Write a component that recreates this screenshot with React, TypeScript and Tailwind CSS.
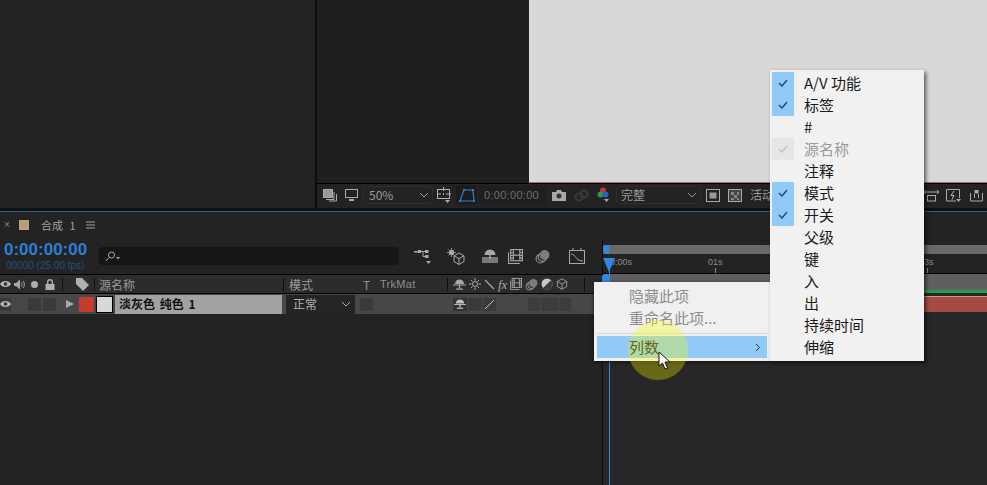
import React from 'react';

const cjk = { fontFamily: '"Noto Sans CJK SC", "Liberation Sans", sans-serif' };
const latin = { fontFamily: '"Liberation Sans", sans-serif' };

const menuItems = [
  { label: 'A/V 功能', checked: true },
  { label: '标签', checked: true },
  { label: '#' },
  { label: '源名称', disabled: true },
  { label: '注释' },
  { label: '模式', checked: true },
  { label: '开关', checked: true },
  { label: '父级' },
  { label: '键' },
  { label: '入' },
  { label: '出' },
  { label: '持续时间' },
  { label: '伸缩' },
];

function Chevron({ className = '' }: { className?: string }) {
  return (
    <svg className={className} width="10" height="6" viewBox="0 0 10 6" fill="none" stroke="currentColor" strokeWidth="1">
      <path d="M1 1l4 4 4-4" />
    </svg>
  );
}

function Eye({ className = '' }: { className?: string }) {
  return (
    <svg className={className} width="11" height="8" viewBox="0 0 11 8">
      <path d="M0 4c2-4 9-4 11 0-2 4-9 4-11 0z" fill="#b5b5b5" />
      <circle cx="5.500" cy="4" r="1.800" fill="#333" />
    </svg>
  );
}

function ParentIcon() {
  return (
    <svg width="17" height="15" viewBox="0 0 17 15" fill="#a8a8a8">
      <rect x="0" y="2" width="6" height="1.500" />
      <rect x="4" y="1" width="3" height="3" />
      <path d="M7 2.500h4M9 2.500v5h2" fill="none" stroke="#a8a8a8" />
      <rect x="11" y="1" width="3.500" height="3" />
      <rect x="11" y="6" width="3.500" height="3" />
      <path d="M12 12h5l-2.500 3z" />
    </svg>
  );
}

function SunCube() {
  return (
    <svg width="18" height="17" viewBox="0 0 18 17" fill="none" stroke="#a8a8a8">
      <circle cx="4.500" cy="4.500" r="2.500" fill="#b8b8b8" stroke="none" />
      <path d="M4.500 0v9M0 4.500h9M1.500 1.500l6 6M1.500 7.500l6-6" strokeWidth="0.800" />
      <path d="M12 5l5 2.800v5.700L12 16.500l-5-3V7.800zM7 7.800l5 2.800 5-2.800M12 10.600v5.900" />
    </svg>
  );
}

function ShyIcon({ size = 16, color = '#a8a8a8' }: { size?: number; color?: string }) {
  return (
    <svg width={size} height={size} viewBox="0 0 16 16" fill={color}>
      <path d="M2.500 7a5.500 5.500 0 0 1 11 0z" />
      <rect x="7.300" y="7" width="1.400" height="4" fill={color} />
      <rect x="0" y="9" width="16" height="6" opacity="0.650" />
    </svg>
  );
}

function SmallShy({ size = 13, color = '#a8a8a8' }: { size?: number; color?: string }) {
  return (
    <svg width={size} height={size} viewBox="0 0 13 13" fill={color}>
      <path d="M2 6a4.500 4.500 0 0 1 9 0z" />
      <rect x="0" y="6.500" width="13" height="1" />
      <rect x="5.800" y="6.500" width="1.400" height="4" />
      <rect x="3" y="10.500" width="7" height="1.200" />
    </svg>
  );
}

function FilmIcon({ size = 14, color = '#a8a8a8' }: { size?: number; color?: string }) {
  return (
    <svg width={size} height={size} viewBox="0 0 14 14" fill="none" stroke={color}>
      <rect x="2.500" y="0.500" width="11" height="10.500" />
      <path d="M5 0.500v10.500M11 0.500v10.500M2.500 3.500H5M2.500 6H5M2.500 8.500H5M11 3.500h2.500M11 6h2.500M11 8.500h2.500M5 5.700h6" />
      <path d="M0.500 3v10.500H11" />
    </svg>
  );
}

function Stack({ size = 14 }: { size?: number }) {
  return (
    <svg width={size} height={size} viewBox="0 0 14 14">
      <circle cx="5" cy="9" r="4" fill="none" stroke="#999" />
      <circle cx="7" cy="7.500" r="4" fill="#333" stroke="#999" />
      <circle cx="9" cy="5.500" r="4.500" fill="#7d7d7d" />
    </svg>
  );
}

function Cube({ size = 14, color = '#a8a8a8' }: { size?: number; color?: string }) {
  return (
    <svg width={size} height={size} viewBox="0 0 14 14" fill="none" stroke={color}>
      <path d="M7 1l5.500 3v6L7 13l-5.500-3V4zM1.500 4L7 7l5.500-3M7 7v6" />
    </svg>
  );
}

function Toolbar() {
  return (
    <div className="flex h-[22px] shrink-0 items-center text-[#9a9a9a]">
      <svg className="ml-[6px]" width="14" height="13" viewBox="0 0 14 13" fill="none" stroke="#aaa">
        <rect x="0.500" y="0.500" width="9" height="8" fill="#999" />
        <path d="M11 3v7.500H3M13.500 5v7H6" />
      </svg>
      <svg className="ml-[8px]" width="13" height="12" viewBox="0 0 13 12" fill="none" stroke="#aaa">
        <rect x="0.500" y="0.500" width="12" height="8" />
        <path d="M4 11h5" strokeWidth="2" />
      </svg>
      <div className="ml-[5px] flex h-[18px] w-[70px] items-center justify-between rounded-sm border border-[#2e2e2e] pl-[5px] pr-[3px] text-[12px]" style={cjk}>
        <span>50%</span>
        <Chevron />
      </div>
      <svg className="ml-[4px]" width="14" height="16" viewBox="0 0 14 16" fill="none" stroke="#b0b0b0">
        <rect x="0.500" y="2.500" width="12" height="9" />
        <path d="M6.500 0v4M6.500 6v2M0 7h4M9 7h5" />
        <path d="M8 13h5l-2.500 3z" fill="#aaa" stroke="none" />
      </svg>
      <div className="ml-[5px] flex h-[20px] w-[21px] items-center justify-center rounded-sm bg-[#1c1c1c]">
        <svg width="16" height="15" viewBox="0 0 16 15" fill="none" stroke="#2f7fd0" strokeWidth="1.200">
          <path d="M5 2h9l1 11H1z" />
          <path d="M4 1h2v2H4zM13 1h2v2h-2zM14 12h2v2h-2zM0 12h2v2H0z" fill="#2f7fd0" stroke="none" />
        </svg>
      </div>
      <div className="ml-[2px] flex h-[18px] w-[68px] items-center justify-center rounded-sm bg-[#1f1f1f] pr-[3px] text-[11px] tracking-[0.300px] text-[#6e6e6e]" style={latin}>
        0:00:00:00
      </div>
      <svg className="ml-[5px]" width="14" height="11" viewBox="0 0 14 11">
        <path d="M0 2h4l1-2h4l1 2h4v9H0z" fill="#a8a8a8" />
        <circle cx="7" cy="6" r="2.500" fill="#333" />
      </svg>
      <svg className="ml-[8px]" width="15" height="13" viewBox="0 0 15 13" fill="none" stroke="#3a3a3a" strokeWidth="2">
        <circle cx="5" cy="8" r="3.500" />
        <circle cx="10" cy="5" r="3.500" />
      </svg>
      <svg className="ml-[8px]" width="13" height="16" viewBox="0 0 13 16">
        <circle cx="6" cy="3.500" r="3" fill="#c8352b" />
        <circle cx="3.500" cy="7.500" r="3" fill="#2f9a3c" />
        <circle cx="8.500" cy="7.500" r="3" fill="#2a5fc8" />
        <path d="M7 12h5l-2.500 3z" fill="#aaa" />
      </svg>
      <div className="ml-[6px] flex h-[18px] w-[85px] items-center justify-between rounded-sm border border-[#2e2e2e] pl-[4px] pr-[3px] text-[12px]" style={cjk}>
        <span>完整</span>
        <Chevron />
      </div>
      <svg className="ml-[5px]" width="14" height="13" viewBox="0 0 14 13" fill="none" stroke="#aaa">
        <rect x="0.500" y="0.500" width="13" height="12" />
        <rect x="3.500" y="3.500" width="7" height="6" fill="#999" stroke="none" />
      </svg>
      <svg className="ml-[8px]" width="14" height="13" viewBox="0 0 14 13" stroke="#aaa">
        <rect x="0.500" y="0.500" width="13" height="12" fill="#444" />
        <path d="M3 3h3v3H3zM9 3h2v3H9zM6 6h3v3H6zM3 9h3v2H3zM9 9h2v2H9z" fill="#888" stroke="none" />
      </svg>
      <div className="ml-[8px] w-[24px] shrink-0 whitespace-nowrap text-[12px]" style={cjk}>活动</div>
      <div className="ml-auto flex items-center pr-[4px]">
        <svg width="15" height="13" viewBox="0 0 15 13" fill="none" stroke="#aaa">
          <path d="M0 3h15M2 1L0 3l2 2M13 1l2 2-2 2" />
          <rect x="3.500" y="6.500" width="8" height="5.500" />
        </svg>
        <svg className="ml-[7px]" width="15" height="13" viewBox="0 0 15 13" fill="none" stroke="#aaa">
          <path d="M10 12H0.500V0.500h13V9" />
          <path d="M8 2L5 6.500h3L6 10.500" stroke="#bbb" />
          <path d="M10 10h5l-2.500 3z" fill="#aaa" stroke="none" />
        </svg>
        <svg className="ml-[9px]" width="13" height="13" viewBox="0 0 13 13" fill="none" stroke="#aaa">
          <path d="M0.500 4v8h12V4M4.500 5v4M8.500 5v4" />
          <rect x="4.500" y="1" width="4" height="3.500" fill="#aaa" stroke="none" />
        </svg>
      </div>
    </div>
  );
}

function Sep({ className = '' }: { className?: string }) {
  return <div className={`h-[13px] w-px shrink-0 bg-[#0e0e0e] ${className}`} />;
}

function LayerHeader() {
  return (
    <div className="flex h-[18px] items-center bg-[#2c2c2c] text-[12px] text-[#8f8f8f]" style={cjk}>
      <Eye className="shrink-0" />
      <svg className="ml-[3px] shrink-0" width="11" height="11" viewBox="0 0 11 11" fill="#a8a8a8">
        <path d="M0 4h2l4-3.500v10L2 7H0z" />
        <path d="M7.500 3.500a3 3 0 0 1 0 4M9 2a5 5 0 0 1 0 7" fill="none" stroke="#a8a8a8" />
      </svg>
      <div className="ml-[6px] h-[7px] w-[7px] shrink-0 rounded-full bg-[#b0b0b0]" />
      <svg className="ml-[7px] shrink-0" width="10" height="11" viewBox="0 0 10 11" fill="#b0b0b0">
        <path d="M2 5V3a3 3 0 0 1 6 0v2H6.600V3a1.600 1.600 0 0 0-3.200 0v2z" />
        <rect x="0.500" y="5" width="9" height="6" />
      </svg>
      <Sep className="ml-[7px]" />
      <svg className="ml-[13px] shrink-0" width="13" height="13" viewBox="0 0 13 13" fill="#b0b0b0">
        <path d="M0 0h6l7 7-6 6-7-7z" />
      </svg>
      <Sep className="ml-[5px]" />
      <span className="ml-[4px] w-[184px] shrink-0 pt-[1px] text-[#9a9a9a]">源名称</span>
      <Sep />
      <span className="ml-[5px] w-[74px] shrink-0 pt-[1px] text-[#9a9a9a]">模式</span>
      <span className="w-[17px] shrink-0 pt-[1px]">T</span>
      <span className="w-[67px] shrink-0 pt-[1px] tracking-[0.300px]" style={{ ...latin, fontSize: 11 }}>TrkMat</span>
      <Sep />
      <div className="ml-[5px] flex w-[131px] shrink-0 items-center gap-[3px]">
        <SmallShy />
        <svg width="12" height="12" viewBox="0 0 12 12" fill="none" stroke="#a8a8a8">
          <circle cx="6" cy="6" r="2.500" />
          <path d="M6 0v2.500M6 9.500V12M0 6h2.500M9.500 6H12M2 2l1.500 1.500M8.500 8.500L10 10M2 10l1.500-1.500M8.500 3.500L10 2" />
        </svg>
        <svg width="11" height="11" viewBox="0 0 11 11" stroke="#a8a8a8" strokeWidth="1.200"><path d="M1 1l9 9" /></svg>
        <span className="text-[13px] italic leading-none text-[#a8a8a8]" style={{ fontFamily: '"Liberation Serif", serif' }}>fx</span>
        <FilmIcon size={12} />
        <Stack size={13} />
        <svg width="12" height="12" viewBox="0 0 12 12">
          <circle cx="6" cy="6" r="5.500" fill="#c8c8c8" />
          <path d="M10 2.200A5.500 5.500 0 0 1 2 10z" fill="#3a3a3a" />
        </svg>
        <Cube size={12} />
      </div>
      <Sep />
    </div>
  );
}

function LayerRow() {
  return (
    <div className="flex h-[20px] items-center bg-[#474747]">
      <div className="flex h-[13px] w-[11px] shrink-0 items-center justify-center bg-[#383838]">
        <Eye />
      </div>
      <div className="ml-[17px] h-[13px] w-[13px] shrink-0 bg-[#3a3a3a]" />
      <div className="ml-[2px] h-[13px] w-[13px] shrink-0 bg-[#3a3a3a]" />
      <div className="ml-[10px] h-0 w-0 shrink-0 border-y-[4px] border-l-[8px] border-y-transparent border-l-[#a8a8a8]" />
      <div className="ml-[5px] h-[15px] w-[15px] shrink-0 bg-[#c43c30]" />
      <div className="ml-[2px] h-[17px] w-[17px] shrink-0 border border-black bg-[#d8d8d8]" />
      <div className="ml-[2px] flex h-[19px] w-[167px] shrink-0 items-center bg-[#a2a2a2] pl-[4px] text-[12px] font-bold text-[#111] [word-spacing:2px]" style={cjk}>
        淡灰色 纯色 1
      </div>
      <div className="ml-[4px] flex h-[19px] w-[69px] shrink-0 items-center justify-between bg-[#242424] pl-[7px] pr-[4px] text-[12px] text-[#b0b0b0]" style={cjk}>
        <span>正常</span>
        <Chevron />
      </div>
      <div className="ml-[5px] h-[13px] w-[13px] shrink-0 bg-[#3a3a3a]" />
      <div className="ml-[80px] flex h-[13px] w-[14px] shrink-0 items-center justify-center bg-[#333]">
        <SmallShy size={12} color="#c0c0c0" />
      </div>
      <div className="ml-[1px] h-[13px] w-[14px] shrink-0 bg-[#3a3a3a]" />
      <div className="ml-[1px] flex h-[13px] w-[13px] shrink-0 items-center justify-center bg-[#3a3a3a]">
        <svg width="11" height="11" viewBox="0 0 11 11" stroke="#c4c4c4"><path d="M1 10l9-9" /></svg>
      </div>
      <div className="ml-[32px] flex h-[13px] w-[43px] shrink-0 justify-between bg-[#3c3c3c] px-[12px]">
        <div className="h-full w-px bg-[#4a4a4a]" />
        <div className="h-full w-px bg-[#4a4a4a]" />
      </div>
    </div>
  );
}

function TimeRuler() {
  return (
    <div className="relative min-w-0 flex-1 bg-[#272727]">
      <div className="h-[5px] bg-[#232323]" />
      <div className="h-[9px] bg-[#696969]" />
      <div className="relative h-[19px] bg-[#232323] text-[9px] text-[#8c8c8c]" style={latin}>
        <span className="absolute left-[7px] top-[2px]">0:00s</span>
        <span className="absolute left-[105px] top-[2px]">01s</span>
        <div className="absolute left-[112px] top-[14px] h-[5px] w-px bg-[#8c8c8c]" />
        <span className="absolute left-[316px] top-[2px]">03s</span>
        <div className="absolute left-[324px] top-[14px] h-[5px] w-px bg-[#8c8c8c]" />
      </div>
      <div className="h-px bg-black" />
      <div className="h-[16px] bg-[#5f5f5f]" />
      <div className="h-[3px] bg-[#5f5f5f]">
        <div className="ml-[318px] h-[3px] bg-[#21a143]" />
      </div>
      <div className="ml-[318px] mt-[3px] h-[16px] border-t border-[#d49a94] bg-[#a84a44]" />
    </div>
  );
}

function ContextMenus() {
  return (
    <>
      <div className="absolute left-[594px] top-[282px] h-[79px] w-[176px] bg-[#f0f0f0] shadow-[0_1px_4px_rgba(0,0,0,0.6)]" style={cjk}>
        <div className="mt-[3px] flex h-[22px] items-center pl-[35px] text-[15px] text-[#8d8d8d]">隐藏此项</div>
        <div className="flex h-[22px] items-center pl-[35px] text-[15px] text-[#8d8d8d]">重命名此项...</div>
        <div className="mx-[3px] mb-[2px] mt-[4px] h-px bg-[#d8d8d8]" />
        <div className="mx-[3px] flex h-[22px] items-center justify-between bg-[#91c9f7] pl-[32px] pr-[6px] text-[15px] text-[#222]">
          <span>列数</span>
          <svg width="6" height="9" viewBox="0 0 6 9" fill="none" stroke="#333"><path d="M1 1l3.500 3.500L1 8" /></svg>
        </div>
      </div>
      <div className="absolute left-[770px] top-[70px] w-[154px] bg-[#f1f1f1] pb-[3px] pt-[2px] shadow-[2px_2px_4px_rgba(0,0,0,0.6)]" style={cjk}>
        {menuItems.map((item) => (
          <div key={item.label} className="flex h-[22px] items-center">
            <div className={`ml-[2px] flex h-[22px] w-[22px] shrink-0 items-center justify-center ${item.checked ? 'bg-[#91c9f7]' : item.disabled ? 'bg-[#e6e6e6]' : ''}`}>
              {(item.checked || item.disabled) && (
                <svg width="10" height="8" viewBox="0 0 10 8" fill="none" stroke={item.disabled ? '#c4c4c4' : '#1f4f80'} strokeWidth="1.500">
                  <path d="M1 4l3 3 5-6" />
                </svg>
              )}
            </div>
            <span className={`ml-[10px] pb-[2px] text-[15px] leading-none ${item.disabled ? 'text-[#9a9a9a]' : 'text-[#1a1a1a]'}`}>{item.label}</span>
          </div>
        ))}
      </div>
    </>
  );
}

export default function App() {
  return (
    <div className="relative flex h-[485px] w-[987px] flex-col overflow-hidden bg-[#232323]">
      {/* composition viewer */}
      <div className="flex h-[208px] shrink-0">
        <div className="w-[315px] shrink-0 bg-[#222222]" />
        <div className="w-[2px] shrink-0 bg-[#0c0c0c]" />
        <div className="flex min-w-0 flex-1 flex-col">
          <div className="flex h-[183px] shrink-0">
            <div className="w-[212px] shrink-0 bg-[#1f1f1f]" />
            <div className="flex-1 border-b border-[#a86a6a] bg-[#d8d8d8]" />
          </div>
          <div className="h-px bg-black" />
          <Toolbar />
        </div>
      </div>
      <div className="h-[3px] shrink-0 bg-[#0f0f0f]" />
      <div className="h-px shrink-0 bg-[#2a5f94]" />

      {/* timeline */}
      <div className="flex h-[28px] shrink-0 items-center pb-[2px] text-[#a0a0a0]" style={cjk}>
        <span className="ml-[4px] w-[6px] text-[10px] leading-none text-[#8a8a8a]" style={latin}>×</span>
        <div className="ml-[9px] h-[10px] w-[10px] bg-[#b9a07c]" />
        <span className="ml-[12px] text-[11px] [word-spacing:4px]">合成 1</span>
        <svg className="ml-[10px]" width="9" height="8" viewBox="0 0 9 8" stroke="#a0a0a0"><path d="M0 1h9M0 4h9M0 7h9" /></svg>
      </div>

      <div className="flex min-h-0 flex-1">
        <div className="flex w-[602px] shrink-0 flex-col">
          <div className="flex h-[34px] items-start">
            <div className="ml-[4px] w-[95px] shrink-0">
              <div className="text-[17px] font-bold leading-[20px] text-[#2b7fd6]" style={latin}>0:00:00:00</div>
              <div className="ml-[2px] mt-[1px] text-[10px] leading-[10px] text-[#254f80]" style={latin}>00000 (25.00 fps)</div>
            </div>
            <div className="mt-[7px] flex h-[18px] w-[300px] shrink-0 items-center rounded-sm bg-[#161616] pl-[6px]">
              <svg width="16" height="11" viewBox="0 0 16 11" fill="none" stroke="#aaa">
                <circle cx="6.500" cy="4" r="3" />
                <path d="M4 6.500L1 10" />
                <path d="M11 6h4l-2 2.500z" fill="#aaa" stroke="none" />
              </svg>
            </div>
            <div className="mt-[7px] flex h-[18px] items-center">
              <div className="ml-[15px]"><ParentIcon /></div>
              <div className="ml-[16px]"><SunCube /></div>
              <div className="ml-[17px]"><ShyIcon /></div>
              <div className="ml-[10px]"><FilmIcon size={15} /></div>
              <div className="ml-[12px]"><Stack size={15} /></div>
              <svg className="ml-[19px]" width="16" height="16" viewBox="0 0 16 16" fill="none" stroke="#a8a8a8">
                <rect x="0.500" y="2.500" width="15" height="13" />
                <path d="M4 0v2.500M12 0v2.500M2 6c5 0 4 7 12 7" />
              </svg>
            </div>
          </div>
          <div className="h-px bg-black" />
          <LayerHeader />
          <div className="h-px bg-black" />
          <LayerRow />
        </div>
        <div className="w-px shrink-0 bg-[#0f0f0f]" />
        <TimeRuler />
      </div>

      {/* playhead */}
      <div className="absolute left-[609px] top-[258px] h-[227px] w-px bg-[#3a86d8]" />
      <div className="absolute left-[603px] top-[258px] h-0 w-0 border-x-[6px] border-t-[14px] border-x-transparent border-t-[#2e8ae6]" />
      <div className="absolute left-[603px] top-[245px] h-[9px] w-[6px] rounded-l-full bg-[#2e8ae6]" />
      <div className="absolute left-[602px] top-[274px] h-[9px] w-[7px] rounded-t-sm bg-[#2e8ae6]" />

      <ContextMenus />

      {/* cursor highlight */}
      <div className="absolute left-[628px] top-[320px] h-[60px] w-[60px] rounded-full bg-[#ffff00]/30" />
      <svg className="absolute left-[658px] top-[351px]" width="13" height="19" viewBox="0 0 13 19">
        <path d="M1 1v14l3.500-3 2.500 6 2.500-1-2.500-6H12z" fill="#fff" stroke="#111" />
      </svg>
    </div>
  );
}
